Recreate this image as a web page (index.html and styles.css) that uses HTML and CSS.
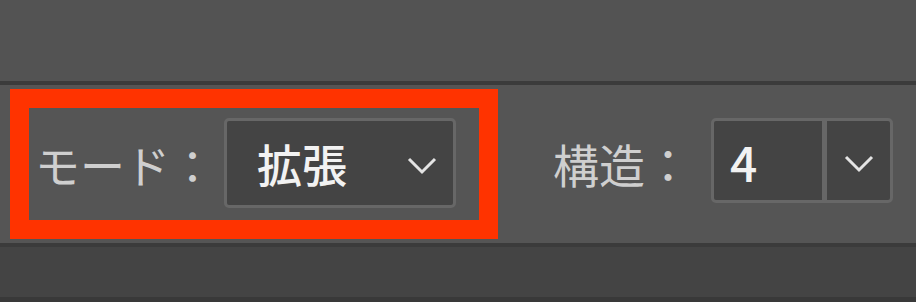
FILE: index.html
```html
<!DOCTYPE html>
<html lang="ja">
<head>
<meta charset="utf-8">
<link rel="stylesheet" href="styles.css">
</head>
<body>
<div class="top"></div>
<div class="sep"></div>
<div class="panel">
  <div class="highlight">
    <span class="label">モード：</span>
    <div class="select mode">
      <span class="value">拡張</span>
      <svg class="chev" viewBox="0 0 30 18" width="30" height="18"><polyline points="2,2 15,15 28,2" fill="none" stroke="#e4e4e4" stroke-width="3"/></svg>
    </div>
  </div>
  <div class="group">
    <span class="label">構造：</span>
    <div class="select combo">
      <span class="num">4</span>
      <span class="arrow"><svg class="chev" viewBox="0 0 30 18" width="30" height="18"><polyline points="2,2 15,15 28,2" fill="none" stroke="#e4e4e4" stroke-width="3"/></svg></span>
    </div>
  </div>
</div>
<div class="sep"></div>
<div class="bottom"></div>
<div class="sep last"></div>
</body>
</html>
```

FILE: styles.css
```css
html, body {
  margin: 0;
  padding: 0;
}
body {
  width: 916px;
  height: 302px;
  overflow: hidden;
  background: #535353;
  font-family: "Noto Sans CJK JP", "Noto Sans", sans-serif;
}
.top {
  height: 81px;
  background: #535353;
}
.sep {
  height: 4px;
  background: #3b3b3b;
}
.sep.last {
  height: 5px;
  background: #393939;
}
.panel {
  height: 158px;
  background: #555555;
  display: flex;
  align-items: center;
  padding-left: 10px;
}
.highlight {
  box-sizing: border-box;
  width: 488px;
  height: 150px;
  border: 19px solid #ff3300;
  display: flex;
  align-items: center;
  padding-left: 6px;
}
.label {
  font-size: 45px;
  line-height: 1;
  color: #cfcfcf;
  white-space: nowrap;
}
.select {
  box-sizing: border-box;
  border: 3px solid #676767;
  border-radius: 5px;
  background: #444444;
  display: flex;
  align-items: center;
}
.mode {
  width: 232px;
  height: 90px;
  margin-left: 9px;
  margin-top: -2px;
  padding-left: 30px;
  padding-right: 16px;
  justify-content: space-between;
}
.value {
  font-size: 45px;
  font-weight: 500;
  line-height: 1;
  color: #f2f2f2;
}
.chev {
  display: block;
  margin-top: 6px;
}
.group {
  display: flex;
  align-items: flex-start;
  height: 90px;
  margin-left: 55px;
  margin-top: -2px;
}
.group .label {
  font-size: 46px;
  line-height: 90px;
}
.combo {
  width: 182px;
  height: 85px;
  margin-left: 20px;
  align-items: stretch;
}
.num {
  box-sizing: border-box;
  width: 113px;
  border-right: 5px solid #676767;
  padding-left: 16px;
  font-size: 48px;
  font-weight: 500;
  color: #f2f2f2;
  display: flex;
  align-items: center;
  line-height: 1;
}
.arrow {
  flex: 1;
  display: flex;
  align-items: center;
  justify-content: center;
}
.bottom {
  height: 50px;
  background: #444444;
}
```
